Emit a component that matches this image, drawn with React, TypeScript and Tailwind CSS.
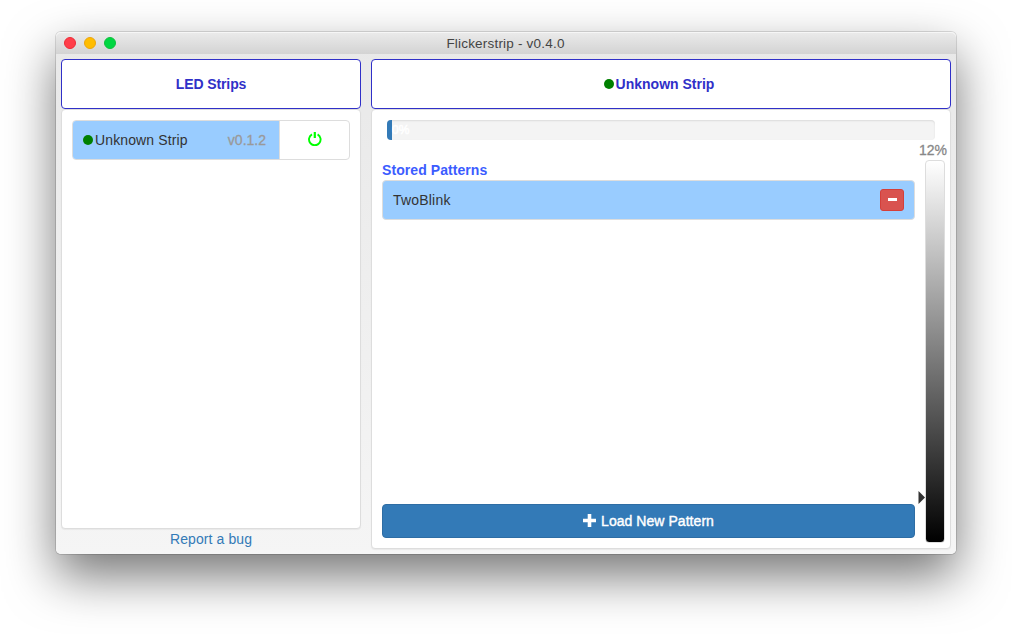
import React from "react";

function StatusDot() {
  return <span className="h-[10px] w-[10px] shrink-0 rounded-full bg-[#008000]" />;
}

function TitleBar() {
  return (
    <header className="relative flex h-[22px] shrink-0 items-center justify-center rounded-t-[5px] bg-linear-to-b/srgb from-[#ebebeb] to-[#d3d3d3] pr-[1px] pt-[2px] shadow-[inset_0_1px_0_#f6f6f6]">
      <div className="absolute left-2 top-[5px] flex gap-2">
        <span className="h-3 w-3 rounded-full border border-[#ee2b36] bg-[#ff3e4a]" />
        <span className="h-3 w-3 rounded-full border border-[#eda50c] bg-[#ffbd00]" />
        <span className="h-3 w-3 rounded-full border border-[#0fc03c] bg-[#00d742]" />
      </div>
      <h1 className="text-[13.5px] leading-5 tracking-[0.2px] text-[#444]">Flickerstrip - v0.4.0</h1>
    </header>
  );
}

function PanelHeader({ children }: { children: React.ReactNode }) {
  return (
    <h2 className="flex h-[50px] shrink-0 items-center justify-center gap-[2px] rounded-[4px] border border-[#3030c8] bg-white text-sm font-bold text-[#3030c8]">
      {children}
    </h2>
  );
}

function StripList() {
  return (
    <section className="flex w-[300px] flex-col">
      <PanelHeader>
        <span className="tracking-[-0.1px]">LED Strips</span>
      </PanelHeader>
      <div className="h-[420px] rounded-[4px] border border-[#ddd] bg-white p-[10px] shadow-[0_1px_1px_rgba(0,0,0,0.05)]">
        <div className="flex h-10 overflow-hidden rounded-[4px] border border-[#ddd]">
          <div className="flex w-[207px] items-center border-r border-[#ddd] bg-[#99ccff] pl-[10px] pr-[13px] text-sm text-[#333]">
            <StatusDot />
            <span className="ml-[2px] tracking-[0.12px]">Unknown Strip</span>
            <span className="ml-auto text-[#999] [-webkit-text-stroke:0.3px_#999]">v0.1.2</span>
          </div>
          <button className="flex flex-1 items-center justify-center" aria-label="Power">
            <svg className="-mt-[2px] h-[14px] w-[14px]" viewBox="0 0 14 14" fill="none" stroke="#00ff00" strokeWidth="1.9">
              <path d="M4 2.4A5.8 5.8 0 1 0 9.6 2.4" />
              <path d="M6.8 0V6" strokeWidth="2.2" />
            </svg>
          </button>
        </div>
      </div>
      <a className="text-center text-sm leading-5 tracking-[0.1px] text-[#337ab7]">Report a bug</a>
    </section>
  );
}

function BrightnessSlider() {
  return (
    <div className="flex w-5 flex-col items-center">
      <span className="flex h-5 w-8 shrink-0 items-center justify-center whitespace-nowrap pr-1 text-sm text-[#888] [-webkit-text-stroke:0.3px_#888]">12%</span>
      <div className="relative h-[383px] w-5 rounded-[4px] border border-[#ddd] bg-linear-to-b/srgb from-white to-black">
        <svg className="absolute -left-[8px] top-[330px] h-[13px] w-[7px]" viewBox="0 0 7 13">
          <path d="M0.5 0L7 6.5L0.5 13Z" fill="#333" />
        </svg>
      </div>
    </div>
  );
}

function StripDetail() {
  return (
    <section className="flex w-[580px] flex-col">
      <PanelHeader>
        <StatusDot />
        <span className="mr-[4px]">Unknown Strip</span>
      </PanelHeader>
      <div className="flex h-[440px] flex-col rounded-[4px] border border-[#ddd] bg-white px-[5px] pt-[10px] shadow-[0_1px_1px_rgba(0,0,0,0.05)]">
        <div className="mx-[10px] flex h-5 shrink-0 overflow-hidden rounded-[4px] bg-[#f4f4f4] shadow-[inset_0_1px_2px_rgba(0,0,0,0.1)]">
          <div className="w-[5px] bg-[#337ab7]" />
          <span className="text-xs leading-5 text-white [-webkit-text-stroke:0.5px_#fff]">0%</span>
        </div>
        <div className="flex pl-[5px]">
          <div className="flex h-[398px] w-[533px] flex-col pt-5">
            <h3 className="h-5 text-sm font-bold leading-5 tracking-[0.07px] text-[#3b5cff]">Stored Patterns</h3>
            <div className="flex h-10 items-center justify-between rounded-[4px] border border-[#ddd] bg-[#99ccff] px-[10px] text-sm text-[#333]">
              <span className="tracking-[0.2px]">TwoBlink</span>
              <button className="flex h-[22px] w-6 items-center justify-center rounded-[3px] border border-[#d43f3a] bg-[#d9534f]" aria-label="Remove">
                <span className="mb-[1px] h-[3px] w-[9px] bg-white" />
              </button>
            </div>
            <button className="mt-auto flex h-[34px] items-center justify-center gap-[5px] rounded-[4px] border border-[#2e6da4] bg-[#337ab7] text-sm text-white [-webkit-text-stroke:0.4px_#fff]">
              <svg className="-mt-[1px] h-[13px] w-[13px]" viewBox="0 0 13 13" fill="none" stroke="white" strokeWidth="3.6">
                <path d="M6.5 0V13M0 6.5H13" />
              </svg>
              <span className="tracking-[0.05px]">Load New Pattern</span>
            </button>
          </div>
          <div className="ml-[10px]">
            <BrightnessSlider />
          </div>
        </div>
      </div>
    </section>
  );
}

export default function App() {
  return (
    <main className="h-[634px] w-[1012px] overflow-hidden bg-white pl-14 pt-8 font-['Liberation_Sans',Arial,sans-serif]">
      <div className="flex h-[522px] w-[900px] flex-col rounded-[5px] bg-linear-to-b/srgb from-[#e8e8e8] to-[#f5f5f5] shadow-[0_0_0_1px_rgba(0,0,0,0.13),0_22px_50px_rgba(0,0,0,0.54)]">
        <TitleBar />
        <div className="flex gap-[10px] p-[5px]">
          <StripList />
          <StripDetail />
        </div>
      </div>
    </main>
  );
}
